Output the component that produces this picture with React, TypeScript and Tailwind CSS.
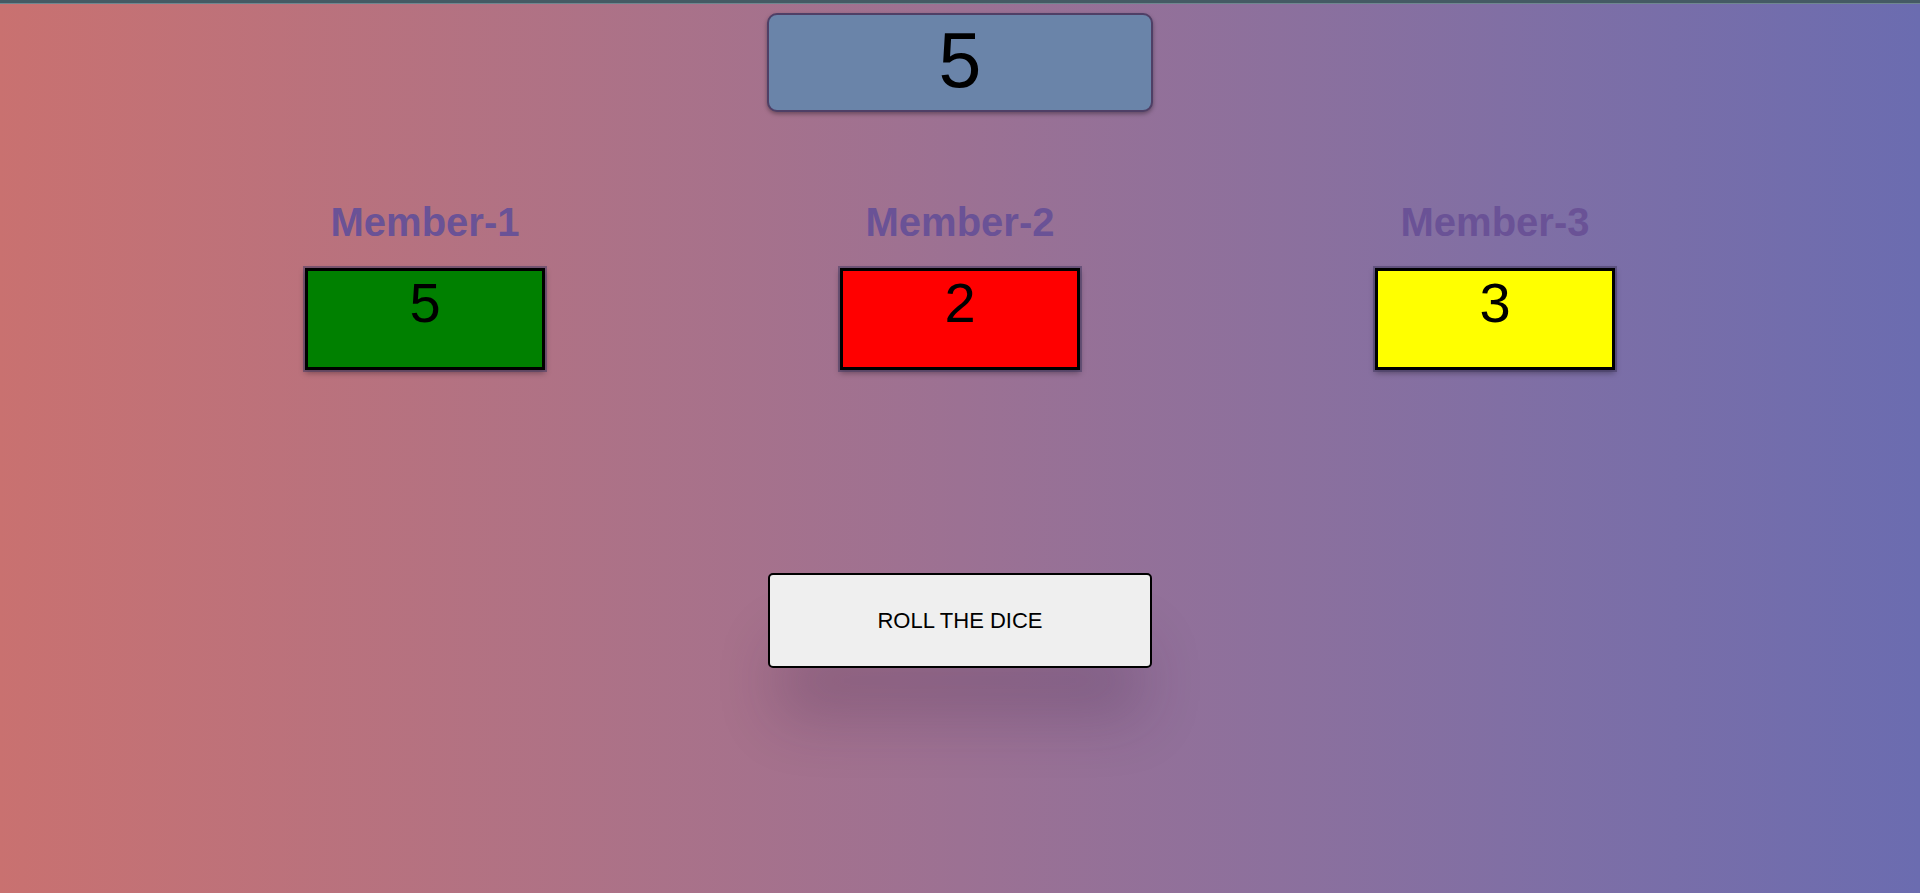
export default function App() {
  const members = [
    { name: 'Member-1', value: 5, color: 'bg-[#008000]' },
    { name: 'Member-2', value: 2, color: 'bg-[#ff0000]' },
    { name: 'Member-3', value: 3, color: 'bg-[#ffff00]' },
  ];

  return (
    <div className="min-h-[893px] w-full flex flex-col bg-gradient-to-r from-[#c97170] via-[#9c7193] to-[#6b6cb0] font-['Liberation_Sans',Arial,sans-serif]">
      {/* top strip */}
      <div className="h-[4px] w-full bg-[#455a64] border-b border-[#6f8790]" />

      {/* current roll */}
      <div className="flex justify-center mt-[9px]">
        <div className="w-[386px] h-[99px] rounded-[10px] border-2 border-[#4f3f66] bg-[#6a84a9] shadow-[0_2px_4px_rgba(0,0,0,0.35)] flex items-center justify-center">
          <span className="text-[77px] leading-none text-black -mt-[4px]">5</span>
        </div>
      </div>

      {/* members */}
      <div className="mx-auto mt-[87px] grid grid-cols-3 w-[1605px]">
        {members.map((m) => (
          <div key={m.name} className="flex flex-col items-center">
            <h2 className="text-[40px] font-bold leading-[46px] text-[#6a5296]">{m.name}</h2>
            <div
              className={`mt-[23px] w-[240px] h-[102px] border-[3px] border-black ${m.color} shadow-[0_0_0_2px_rgba(70,60,100,0.55),0_3px_6px_rgba(0,0,0,0.35)] flex justify-center`}
            >
              <span className="text-[56px] leading-[64px] text-black">{m.value}</span>
            </div>
          </div>
        ))}
      </div>

      {/* roll button */}
      <div className="flex justify-center mt-[203px]">
        <button className="w-[384px] h-[95px] rounded-[5px] border-2 border-black bg-[#efefef] text-[22px] text-black shadow-[0_60px_60px_-10px_rgba(60,30,70,0.22)]">
          ROLL THE DICE
        </button>
      </div>
    </div>
  );
}
